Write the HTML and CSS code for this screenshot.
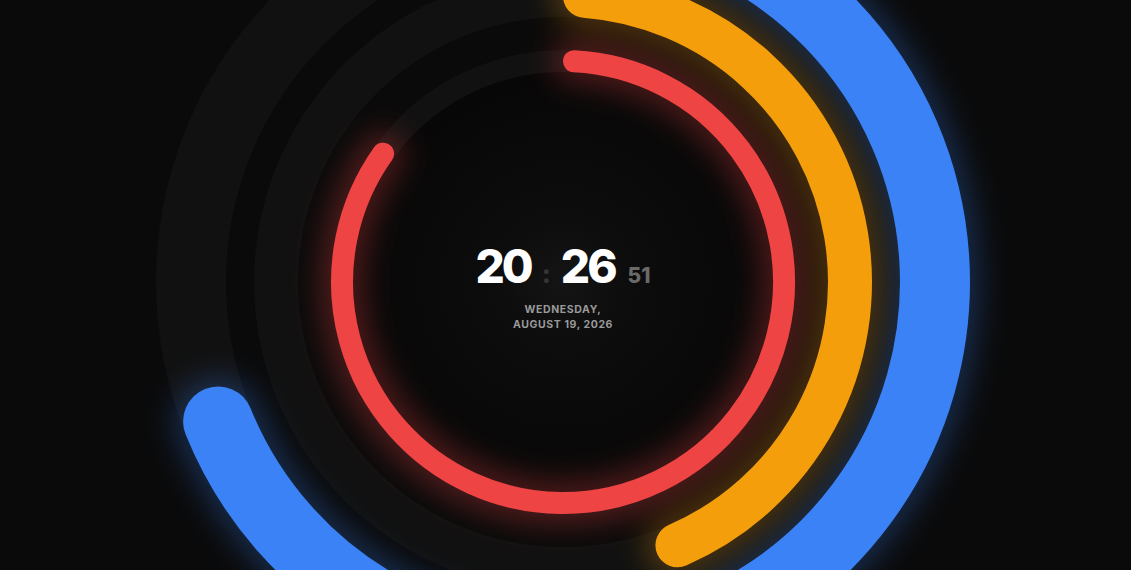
FILE: index.html
```html
<!DOCTYPE html>
<html lang="en">
<head>
<meta charset="utf-8">
<title>Ring Clock</title>
<link rel="stylesheet" href="styles.css">
</head>
<body>
<main class="stage">
  <svg class="rings" viewBox="0 0 1131 570" width="1131" height="570" aria-hidden="true">
    <defs>
      <radialGradient id="core" cx="563" cy="282" r="212" gradientUnits="userSpaceOnUse">
        <stop offset="0" stop-color="#141414"/>
        <stop offset="0.35" stop-color="#0c0c0c"/>
        <stop offset="1" stop-color="#070707"/>
      </radialGradient>
      <filter id="blur" x="-30%" y="-30%" width="160%" height="160%">
        <feGaussianBlur stdDeviation="15"/>
      </filter>
    </defs>

    <circle class="core" cx="563" cy="282" r="212"/>

    <circle class="track track-h" cx="563" cy="282" r="372"/>
    <circle class="track track-m" cx="563" cy="282" r="287"/>
    <circle class="track track-s" cx="563" cy="282" r="221"/>

    <!-- glows -->
    <path class="glow arc-h" filter="url(#blur)" d="M597.9 -88.4 A372 372 0 1 1 218.1 421.4"/>
    <path class="glow arc-m" filter="url(#blur)" d="M584.98 -4.16 A287 287 0 0 1 677.4 545.2"/>
    <path class="glow arc-s" filter="url(#blur)" d="M573.99 61.27 A221 221 0 1 1 383.1 153.7"/>

    <!-- arcs -->
    <path class="arc arc-h" d="M597.9 -88.4 A372 372 0 1 1 218.1 421.4"/>
    <path class="arc arc-m" d="M584.98 -4.16 A287 287 0 0 1 677.4 545.2"/>
    <path class="arc arc-s" d="M573.99 61.27 A221 221 0 1 1 383.1 153.7"/>
  </svg>

  <section class="readout">
    <div class="time">
      <span class="hm">20</span><span class="colon">:</span><span class="hm">26</span><span class="sec">51</span>
    </div>
    <div class="date">WEDNESDAY,<br>AUGUST 19, 2026</div>
  </section>
</main>
</body>
</html>
```

FILE: styles.css
```css
html, body {
  margin: 0;
  padding: 0;
  background: #0a0a0a;
  overflow: hidden;
}

.stage {
  width: 1131px;
  height: 570px;
  display: grid;
  grid-template: 1fr / 1fr;
  background: #0a0a0a;
}

.rings {
  grid-area: 1 / 1;
  display: block;
}

.readout {
  grid-area: 1 / 1;
  z-index: 1;
  display: flex;
  flex-direction: column;
  align-items: center;
  justify-content: center;
  padding: 0 5px 0 0;
  font-family: "Inter", "Lato", "Liberation Sans", sans-serif;
}

.core {
  fill: url(#core);
}

.track {
  fill: none;
  stroke: #111111;
}

.track-h { stroke-width: 70; }
.track-m { stroke-width: 44; }
.track-s { stroke-width: 22; }

.arc, .glow {
  fill: none;
  stroke-linecap: round;
}

.arc-h { stroke: #3b82f6; stroke-width: 70; }
.arc-m { stroke: #f59e0b; stroke-width: 44; }
.arc-s { stroke: #ef4444; stroke-width: 22; }

.glow.arc-h { stroke-width: 90; opacity: 0.28; }
.glow.arc-m { stroke-width: 64; opacity: 0.28; }
.glow.arc-s { stroke-width: 44; opacity: 0.3; }

.time {
  display: flex;
  align-items: baseline;
  line-height: 1;
  margin-top: 4px;
}

.hm {
  font-size: 46px;
  font-weight: 800;
  color: #ffffff;
  letter-spacing: -3px;
}

.colon {
  font-size: 26px;
  font-weight: 800;
  color: #353535;
  margin: 0 10px 0 11px;
}

.sec {
  font-size: 21px;
  font-weight: 800;
  color: #6a6a6a;
  margin-left: 13px;
}

.date {
  margin-top: 13px;
  font-size: 10.5px;
  font-weight: 700;
  line-height: 15px;
  letter-spacing: 0.6px;
  color: #9a9a9a;
  text-align: center;
}
```
